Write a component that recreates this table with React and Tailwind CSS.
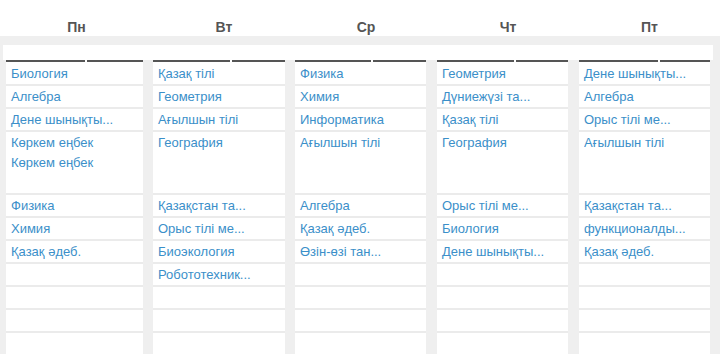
const DAYS = [
  {
    name: "Пн",
    w: "w-[137px]",
    split: "w-[79px]",
    lessons: ["Биология", "Алгебра", "Дене шынықты...", ["Көркем еңбек", "Көркем еңбек"], "Физика", "Химия", "Қазақ әдеб.", "", "", "", ""],
  },
  {
    name: "Вт",
    w: "w-[132px]",
    split: "w-[77px]",
    lessons: ["Қазақ тілі", "Геометрия", "Ағылшын тілі", ["География"], "Қазақстан та...", "Орыс тілі ме...", "Биоэкология", "Робототехник...", "", "", ""],
  },
  {
    name: "Ср",
    w: "w-[131px]",
    split: "w-[76px]",
    lessons: ["Физика", "Химия", "Информатика", ["Ағылшын тілі"], "Алгебра", "Қазақ әдеб.", "Өзін-өзі тан...", "", "", "", ""],
  },
  {
    name: "Чт",
    w: "w-[131px]",
    split: "w-[77px]",
    lessons: ["Геометрия", "Дүниежүзі та...", "Қазақ тілі", ["География"], "Орыс тілі ме...", "Биология", "Дене шынықты...", "", "", "", ""],
  },
  {
    name: "Пт",
    w: "w-[131px]",
    split: "w-[79px]",
    lessons: ["Дене шынықты...", "Алгебра", "Орыс тілі ме...", ["Ағылшын тілі"], "Қазақстан та...", "функционалды...", "Қазақ әдеб.", "", "", "", ""],
  },
];

const HEAD_WIDTHS = ["w-[153px]", "w-[142px]", "w-[142px]", "w-[142px]", "w-[141px]"];

function Cell({ value }) {
  // the 4th row is the tall one (double lesson slot)
  if (Array.isArray(value)) {
    return (
      <div className="h-[63px] border-b-2 border-[#ebebeb] px-[5px]">
        {value.map((v, i) => (
          <div key={i} className="h-[20px] leading-[21px] truncate">
            {v}
          </div>
        ))}
      </div>
    );
  }
  return (
    <div className="h-[23px] border-b-2 border-[#ebebeb] px-[5px] leading-[21px] truncate">
      {value}
    </div>
  );
}

function DayColumn({ day }) {
  return (
    <div className={`${day.w} shrink-0 bg-white`}>
      <div className="flex gap-[2px]">
        <div className={`${day.split} h-[2px] bg-[#555]`} />
        <div className="h-[2px] flex-1 bg-[#555]" />
      </div>
      <div className="pt-px">
        {day.lessons.map((l, i) => (
          <Cell key={i} value={l} />
        ))}
      </div>
    </div>
  );
}

export default function App() {
  return (
    <div
      className="h-[354px] w-[720px] overflow-hidden bg-white text-[13px] text-[#3b8fc9]"
      style={{ fontFamily: '"Liberation Sans", Arial, sans-serif' }}
    >
      <div className="flex h-[36px] items-end">
        {DAYS.map((d, i) => (
          <div
            key={d.name}
            className={`${HEAD_WIDTHS[i]} text-center text-[14px] font-bold text-[#555] leading-[18px]`}
          >
            {d.name}
          </div>
        ))}
      </div>
      <div className="h-[318px] bg-[#efefef] pt-[9px]">
        <div className="ml-[3px] h-[15px] w-[710px] bg-white" />
        <div className="flex pl-[6px]">
          <DayColumn day={DAYS[0]} />
          <div className="w-[10px] shrink-0" />
          <DayColumn day={DAYS[1]} />
          <div className="w-[10px] shrink-0" />
          <DayColumn day={DAYS[2]} />
          <div className="w-[11px] shrink-0" />
          <DayColumn day={DAYS[3]} />
          <div className="w-[11px] shrink-0" />
          <DayColumn day={DAYS[4]} />
        </div>
      </div>
    </div>
  );
}
